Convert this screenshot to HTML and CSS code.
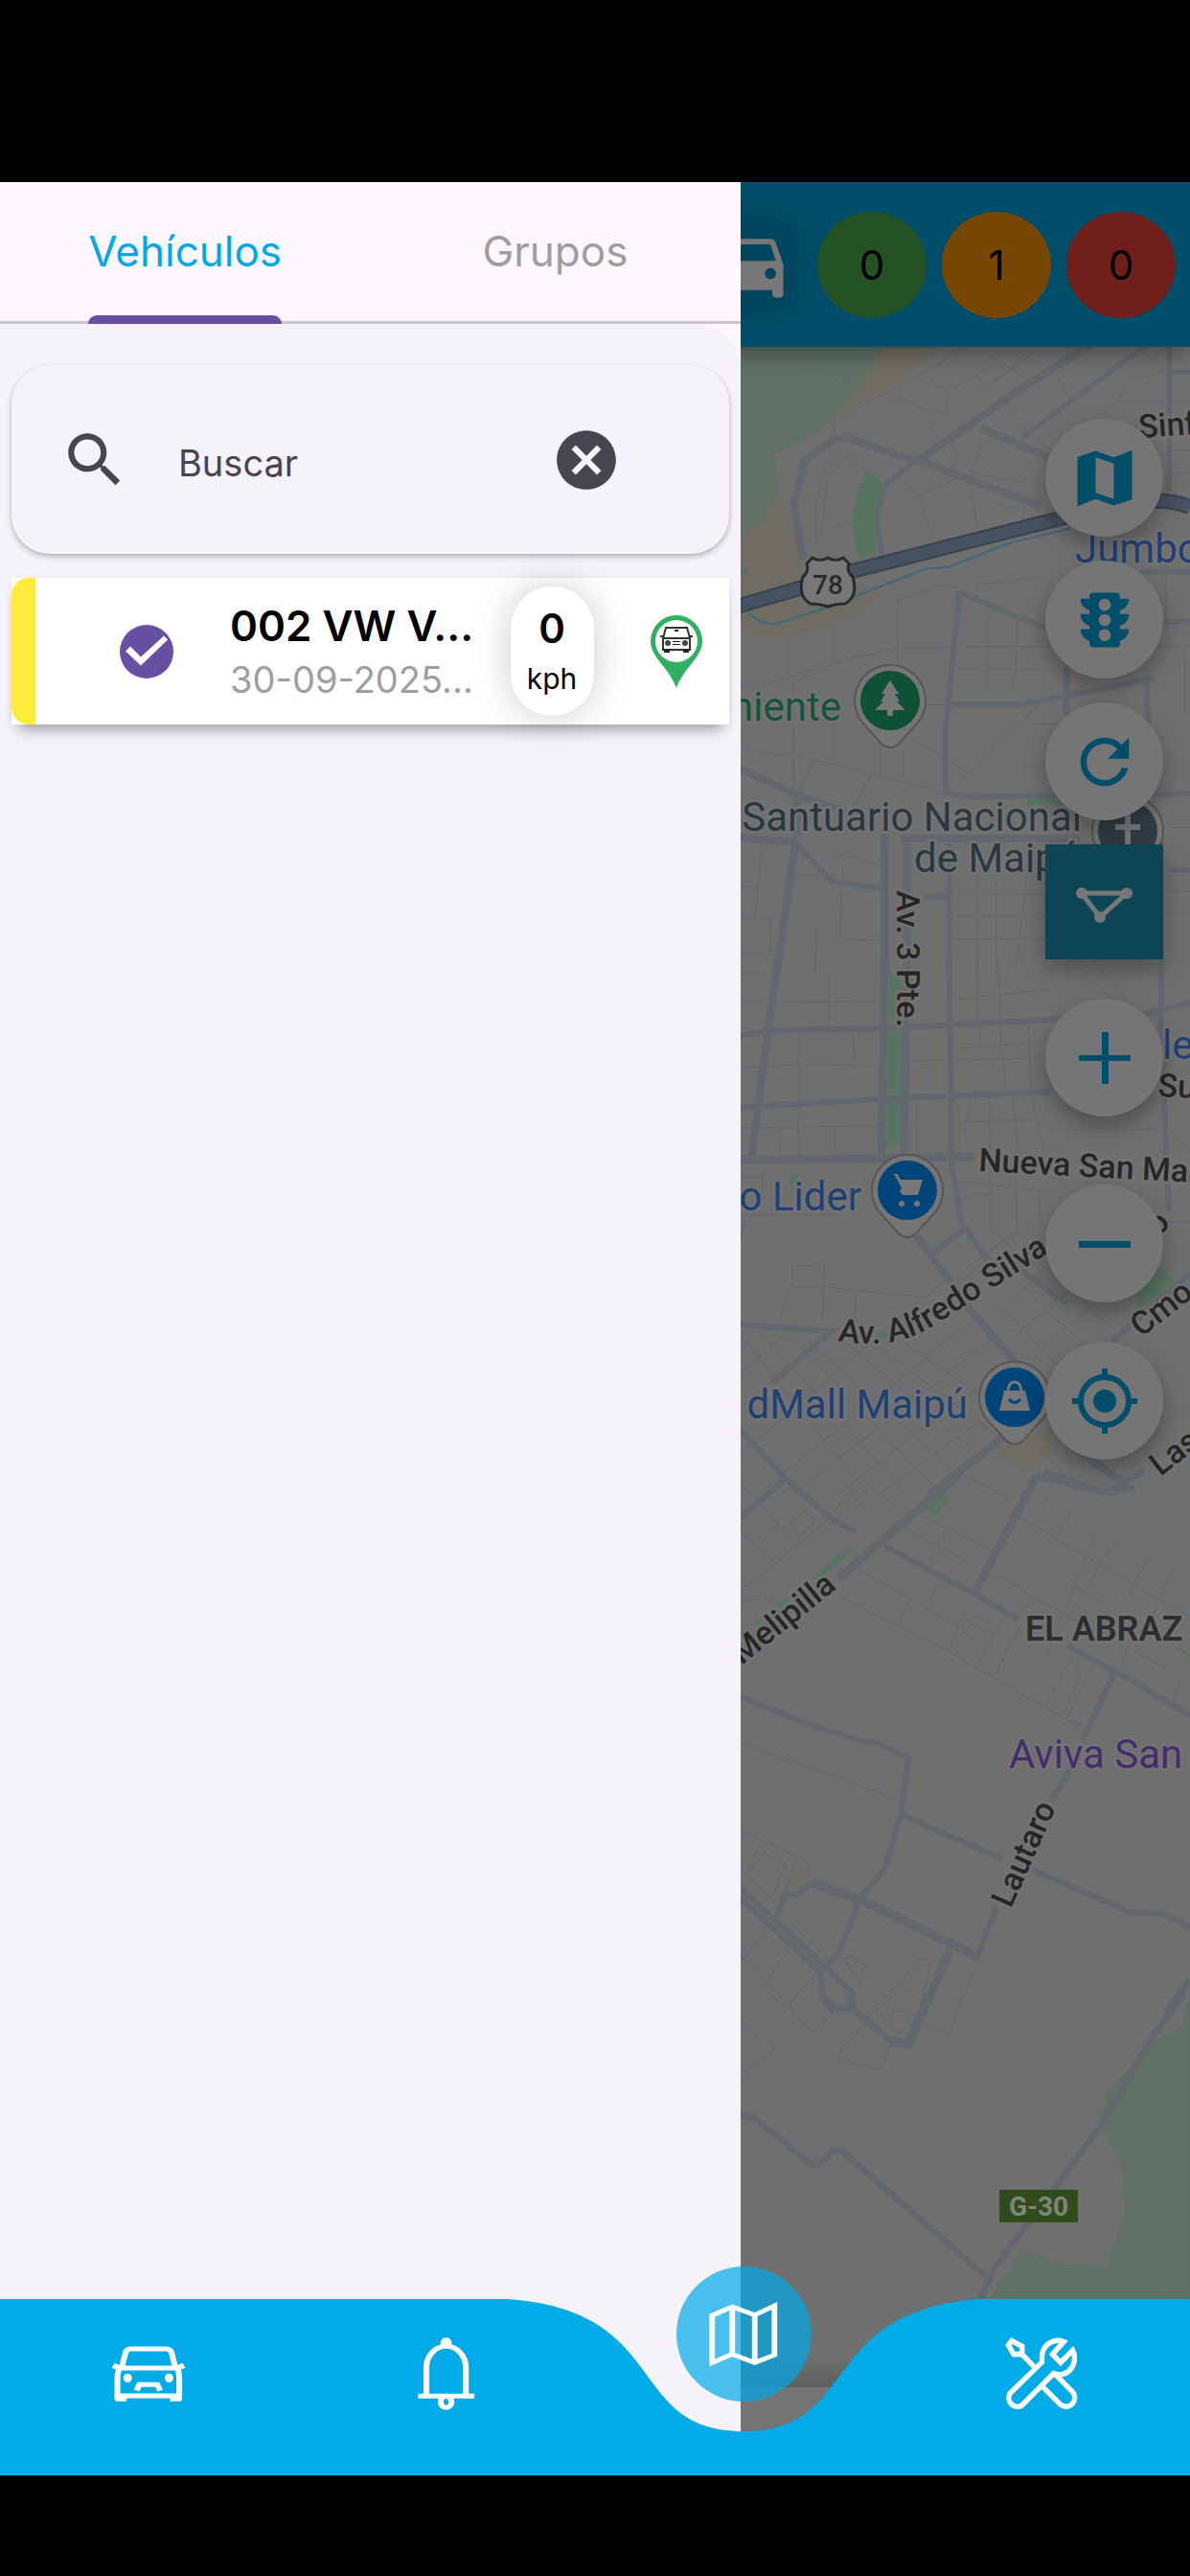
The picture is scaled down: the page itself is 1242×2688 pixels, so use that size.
FILE: index.html
```html
<!DOCTYPE html>
<html lang="es">
<head>
<meta charset="utf-8">
<meta name="viewport" content="width=device-width, initial-scale=1">
<title>Vehículos</title>
<link rel="stylesheet" href="styles.css">
</head>
<body>
<div class="app">
  <main class="screen">
    <header class="topbar">
      <span class="topbar-car">
        <svg viewBox="0 0 24 24" aria-hidden="true"><path d="M18.92 6.01C18.72 5.42 18.16 5 17.5 5h-11c-.66 0-1.21.42-1.42 1.01L3 12v8c0 .55.45 1 1 1h1c.55 0 1-.45 1-1v-1h12v1c0 .55.45 1 1 1h1c.55 0 1-.45 1-1v-8l-2.08-5.99zM6.5 16c-.83 0-1.5-.67-1.5-1.5S5.67 13 6.5 13s1.5.67 1.5 1.5S7.33 16 6.5 16zm11 0c-.83 0-1.5-.67-1.5-1.5s.67-1.5 1.5-1.5 1.5.67 1.5 1.5-.67 1.5-1.5 1.5zM5 11l1.5-4.5h11L19 11H5z"/></svg>
      </span>
      <span class="count count-green">0</span>
      <span class="count count-orange">1</span>
      <span class="count count-red">0</span>
    </header>

    <section class="map" aria-label="Mapa">
      <svg class="map-canvas" viewBox="0 362 1242 2129" preserveAspectRatio="xMaxYMin slice">
        <!-- northern districts -->
        <g transform="translate(760 180) scale(.3333)" fill="none" stroke-linejoin="round">
          <path class="wood" d="M0 540H495L400 680 290 800 145 880 155 1005 95 1090 0 1180Z"/>
          <path class="sand" d="M495 540H665L560 640 470 690 390 740 290 800 400 680ZM155 1005L215 1150 240 1300 400 1290 490 1310 400 1390 190 1455 90 1455 0 1380V1180L95 1090Z"/>
          <path class="lane" d="M160 575L440 690 690 760M700 580L540 660 530 700 640 760M740 548L590 640 700 690M850 600L690 680 680 750M320 790L540 660M330 790L330 825M360 860L300 930 275 1040 275 1160M375 880L310 960 290 1140M240 1155L380 1090M370 870L430 940M550 960L600 1010 690 970 740 940M600 1010L640 1150M760 990L780 1110M700 840L720 890 700 930M800 840L760 940 920 970M890 740L940 800M1030 640L1070 700M1180 760L1260 650 1380 620M1210 718H1446M900 600L820 660M960 560L800 680M1300 560L1380 640M1390 870H1446M1390 940H1446M790 1290L1000 1265M530 1340L660 1290 730 1300M620 780L660 800M810 570L930 640M840 1040L925 1055 920 1085"/>
          <path class="road" stroke-width="16" d="M1310 540L920 830M1382 540V1000M1390 625H1446M480 1200L465 1080 490 980 590 900"/>
          <path class="road" stroke-width="26" d="M1130 540L900 690 740 800 590 905M790 800L1000 890"/>
          <path class="road" stroke-width="24" d="M590 905L370 830Q340 820 240 905L205 1040 235 1210M590 900L980 1045"/>
          <path class="park" d="M435 930L490 975Q450 1050 465 1190L410 1210Q360 1060 435 930Z"/>
          <path d="M30 1358L230 1300 400 1245 1050 1080 1230 1045Q1360 1010 1446 1048" stroke="#374253" stroke-width="48"/>
          <path d="M30 1358L230 1300 400 1245 1050 1080 1230 1045Q1360 1010 1446 1048" stroke="#475260" stroke-width="36"/>
          <path d="M60 1380L100 1405 145 1415 300 1365 620 1240 690 1235 880 1160 1070 1115" stroke="#426973" stroke-width="7"/>
        </g>
        <g transform="translate(760 580) scale(.3333)" fill="none">
          <path class="lane" d="M185 260V390M330 210V330M39 400H120L200 380 330 335 530 290H720M470 340L475 450M210 390L270 370 340 330M390 465L690 467M530 140V340M530 140L650 95 720 100M780 90L1000 65M780 90V120M810 200V420M905 190V300L890 420M720 355H1000M740 285H1060M820 580L830 605 710 730M980 460L830 605M980 460L930 500 960 525H1060M39 605L280 640 450 685 740 755M270 640L215 740M205 400V740M330 450V640M475 580V700M450 685L390 790M550 600V690M570 570L690 640 750 680M1070 280H1446M1370 30V230M1430 290V500M930 680V655H1000M340 930L480 970M360 970L350 1200M105 910L85 1130M39 1030L95 1045M210 1000H340M39 1135H135L130 1240M39 1250H180M280 1150L270 1320M350 1200L480 1205M700 1060H990M700 1130H1000M700 1200H990M780 1000V1320M840 1010V1320M940 960L900 1300M960 1250H1140L1180 1320M1370 1050H1446M1370 1120H1446M1380 850H1446"/>
          <path class="road" stroke-width="18" d="M725 110L705 300 680 560V740L760 755 1446 745M700 465H920L1330 385M725 115L900 190 1000 225 1100 215 1446 205M1060 210V500M1310 380L1315 560M210 900L325 1020 500 1045M610 1070L690 1065M1380 985H1446M692 900V1320M1355 1260V1320M60 50H0M1290 50H1446"/>
          <path class="road" stroke-width="24" d="M0 650L210 745 390 810M215 740V880M540 885H1100M39 882L210 898M210 900L150 1320M490 870V1320M560 900V1320"/>
          <path class="park" d="M935 760H1080V780H935Z"/>
        </g>

        <!-- centre -->
        <g transform="translate(760 1000) scale(.3333 .3571)" fill="none">
          <path class="park" d="M505 30L545 80V180H500ZM500 215H552L545 395H495ZM492 415H552L548 545H492ZM190 625H225L195 670ZM1360 905L1400 945 1290 1025 1265 970ZM470 1090H505V1110H470Z"/>
          <path class="sand" d="M850 1440L880 1410 1010 1380 1005 1450 950 1505 840 1460ZM655 425H685V570H725V380H700V440Z"/>
          <path class="lane" d="M39 45H120M39 130L480 125M315 40V200M220 210V580M120 210L100 420M390 210L395 300M39 320L220 310 485 315M570 300L1010 290M790 200V260M700 265L920 250 1000 240M850 0V200L870 400M780 0V180M940 200L950 400M720 120L1010 90M39 495L480 490M160 490L165 580M335 490V580M590 420V570M820 400V780M760 410L740 500M890 400L910 570M950 400L990 560M720 480L980 470M710 650L1000 680M720 700L820 690M820 780L900 860M900 570L905 800 860 850M970 680L980 760M1060 500H1340M1070 0L1200 120 1290 170M1140 0L1290 170M39 640H110L105 700H190M60 740L39 820M200 900L300 895 295 1060M200 900V960H295L620 990 690 930M190 960L160 1070M400 980L395 1060M39 750H370M740 910L900 800M700 960L830 870M39 1100L440 1568M100 1090L560 1568M190 1100L640 1540M250 1120L720 1510M340 1100L800 1460M420 1100L850 1400M500 1090L870 1330M39 1210L180 1100M39 1310L400 1040M39 1450L600 1000M90 1568L760 1060M200 1568L830 1110M340 1568L870 1190M470 1568L790 1350M880 1010L1000 900M900 1100L1100 950M960 1170L1180 980M840 1000L1100 1260M900 940L1150 1160M1000 900L1200 1080M1380 770H1446M1380 500L1446 560M1240 860L1330 960"/>
          <path class="road" stroke-width="18" d="M39 225L140 210 480 205 1000 180 1320 160 1446 130M39 435L500 410 1010 390M692 0L700 600 730 770 810 880M640 860L740 790M39 1070L320 1090 140 1240M39 1380L190 1530M1357 0L1355 200 1380 740M900 900L1060 1010M990 1500L1180 1560 1300 1500M1446 920L1200 1120"/>
          <path class="road" stroke-width="24" d="M155 0L70 600M490 0L480 570M560 0L550 570M39 590L770 580M590 810L760 1030 900 1180M860 1400L630 1568M1080 1430L1250 1540"/>
        </g>

        <!-- southern districts -->
        <g transform="translate(760 1540) scale(.3333 .3571)" fill="none">
          <path class="park" d="M615 90L670 48 695 68 645 118ZM260 300L375 205 395 215 280 305ZM150 380L180 355 190 365 165 385ZM80 435L100 420V435ZM1380 490L1446 520V535Z"/>
          <path class="sand" d="M220 1145L255 1160 235 1205 190 1200Z"/>
          <path class="lane" d="M39 20L200 190M39 165L150 255M100 85L190 180M39 340L310 130M39 370L110 345 150 380M310 130L420 0M340 0L430 100M420 10L530 95M400 70L300 160M240 100L270 130 230 175 190 140ZM110 90L160 140 110 190 60 150M200 30L150 60M590 110L830 220M550 150L780 270M400 270L720 440 690 510M350 350L690 515 1110 740M570 360L530 440M660 300L630 380M680 170L630 260M750 0L880 70M910 120L1440 410M1000 60L980 100M1075 100L1040 170M1155 160L990 540M1215 185L1050 440M1315 240L1240 370M1390 280L1330 410M840 290L1100 430M980 360L910 390M1070 320L1180 370M750 380L690 510M760 400L820 430M740 420L810 460M730 450L790 490M860 420L770 570M920 430L830 590M1075 530L1100 580 1050 700M1075 530L990 680M1150 540L1060 710 1110 730M1260 480L1230 560M1270 510L1370 565 1350 540M1420 590L1395 660M39 780L530 945M39 1040L110 1065 250 1130 255 1160M110 1065L60 1150M110 1100L180 1135 135 1235 60 1165ZM220 1110L180 1210M39 1420L120 1320M120 1480L190 1380M190 1540L290 1440M39 1400L210 1568M200 1310L310 1410M360 1410L390 1405 430 1430 410 1480 360 1410M600 1410L530 1490 440 1568M600 1410Q640 1410 630 1440L610 1520 530 1490M770 1430L720 1568"/>
          <path class="road" stroke-width="18" d="M39 120L180 10 330 130 400 165M490 205L760 340 910 420M1060 495L1210 570 1446 700M1210 575L1110 770M1070 860L1010 950M840 1260L775 1420M39 645L250 725 420 775 480 785 565 825 540 990 490 1150 415 1230 350 1390 290 1450 295 1520 350 1568M540 990L860 1120M950 1150L1260 1275 1360 1280 1446 1320M39 1205L300 1430 390 1510V1568M39 1235L290 1450M150 1290L180 1220 215 1225 255 1190M965 0L1180 50 1275 35"/>
          <path class="road" stroke-width="26" d="M345 300L480 190 720 0M965 0L775 335M260 1190L420 1240 780 1405M695 1385L610 1568"/>
          <path class="road" stroke-width="22" d="M1446 1475L1370 1568"/>
        </g>
        <g transform="translate(760 2080) scale(.3333 .3444)" fill="none">
          <path class="wood" d="M1446 0L1420 100 1345 140 1185 300 1160 380 1235 530 1245 650 1185 830 1050 820 925 775 820 925 800 1200H1446Z"/>
          <path class="lane" d="M39 80L145 170 39 270M130 0L265 115 330 60M180 40L225 0M430 90L350 180V200L475 235 510 150M520 50L560 60 570 100 530 120 505 90ZM460 50L510 90M530 0L460 50M610 90L690 125 735 0"/>
          <path class="road" stroke-width="20" d="M290 0L325 50 380 45 385 0M380 40L510 145M39 370Q70 370 90 385L250 510Q270 530 290 515L325 480Q345 470 365 485L815 865M785 930L830 840Q900 740 950 685L1175 390 1330 130 1430 0"/>
          <path class="road" stroke-width="28" d="M510 145L565 155 630 0"/>
        </g>

        <!-- labels -->
        <g class="lbl street">
          <text transform="translate(1189 457) rotate(-4)">Sinf</text>
          <text transform="translate(936 929) rotate(90)">Av. 3 Pte.</text>
          <text transform="translate(1208 1144) rotate(3)">Su</text>
          <text transform="translate(1021 1222) rotate(3)">Nueva San Mar</text>
          <text transform="translate(1208 1291) rotate(-40)">o</text>
          <path id="silva" d="M874 1399Q930 1409 970 1386L1130 1285" fill="none" stroke="none"/>
          <text><textPath href="#silva">Av. Alfredo Silva</textPath></text>
          <text transform="translate(1191 1396) rotate(-38)">Cmo</text>
          <text transform="translate(1211 1541) rotate(-38)">Las</text>
          <text transform="translate(874 1657) rotate(-39)" text-anchor="end">Melipilla</text>
          <text transform="translate(1055 1992) rotate(-66)">Lautaro</text>
          <text class="district" x="1070" y="1712">EL ABRAZ</text>
        </g>
        <g class="lbl place">
          <text class="shop" x="1122" y="587">Jumbo</text>
          <text class="green" x="878" y="752" text-anchor="end">niente</text>
          <text class="civic" x="1129" y="867" text-anchor="end">Santuario Nacional</text>
          <text class="civic" x="954" y="910">de Maipú</text>
          <text class="shop" x="1213" y="1105">le</text>
          <text class="shop" x="899" y="1263" text-anchor="end">o Lider</text>
          <text class="shop" x="1010" y="1480" text-anchor="end">dMall Maipú</text>
          <text class="hotel" x="1053" y="1845">Aviva San</text>
        </g>

        <path d="M842 588l6-6q8 5 16 0 8 5 16 0l6 6q-3 8 4 14 6 20-8 28-10 0-18 3-8-3-18-3-14-8-8-28 7-6 4-14z" fill="#777" stroke="#2a2a2a" stroke-width="3"/>
        <text class="shield" x="864" y="620" text-anchor="middle">78</text>
        <path d="M1043 2285h82v34h-82z" fill="#314c1c"/>
        <text class="route" x="1084" y="2312" text-anchor="middle">G-30</text>

        <!-- place pins -->
        <defs>
          <path id="drop" d="M0-37A37 37 0 0 0-29 23L-9 45Q0 53 9 45L29 23A37 37 0 0 0 0-37Z"/>
        </defs>
        <g transform="translate(929 731)">
          <use href="#drop" class="drop"/><circle r="31" fill="#0e5137"/>
          <path d="M0-21L-9-7h4l-5 8h3L-16 10H-3v6H3v-6H16L7 1h3L5-7h4z" fill="#777"/>
        </g>
        <g transform="translate(1177 867)">
          <use href="#drop" class="drop"/><circle r="31" fill="#323d44"/>
          <path d="M-3-18H3v11H13v6H3V18H-3V-1H-13V-7H-3z" fill="#777"/>
        </g>
        <g transform="translate(947 1242)">
          <use href="#drop" class="drop"/><circle r="31" fill="#004579"/>
          <path d="M-15-17h5l3 6H16L11 5H-5L-8 1-6-2-12-14-15-17zM-4 7H10" fill="#777"/><circle cx="-6" cy="14" r="3" fill="#777"/><circle cx="10" cy="14" r="3" fill="#777"/>
        </g>
        <g transform="translate(1059 1458)">
          <use href="#drop" class="drop"/><circle r="31" fill="#004579"/>
          <path d="M-11-7H11L16 14H-16Z" fill="#777"/><path d="M-7-7Q-6-16 0-16T7-7" fill="none" stroke="#777" stroke-width="3"/><path d="M-6 2Q0 9 6 2" fill="none" stroke="#004579" stroke-width="3"/>
        </g>
      </svg>

      <div class="tools">
        <button class="fab" type="button" aria-label="Tipo de mapa"><svg viewBox="0 0 24 24"><path d="M15 5.1L9 3 3 5.02v16.2l6-2.33 6 2.1 6-2.02V2.77L15 5.1zm0 13.79l-6-2.11V5.11l6 2.11v11.67z"/></svg></button>
        <button class="fab" type="button" aria-label="Tráfico"><svg viewBox="0 0 24 24"><path d="M20 10h-3V8.86c1.72-.45 3-2 3-3.86h-3V4c0-.55-.45-1-1-1H8c-.55 0-1 .45-1 1v1H4c0 1.86 1.28 3.41 3 3.86V10H4c0 1.86 1.28 3.41 3 3.86V15H4c0 1.86 1.28 3.41 3 3.86V20c0 .55.45 1 1 1h8c.55 0 1-.45 1-1v-1.14c1.72-.45 3-2 3-3.86h-3v-1.14c1.72-.45 3-2 3-3.86zm-8 9c-1.11 0-2-.9-2-2s.89-2 2-2c1.1 0 2 .9 2 2s-.89 2-2 2zm0-5c-1.11 0-2-.9-2-2s.89-2 2-2c1.1 0 2 .9 2 2s-.89 2-2 2zm0-5c-1.11 0-2-.9-2-2 0-1.11.89-2 2-2 1.1 0 2 .89 2 2 0 1.1-.89 2-2 2z"/></svg></button>
        <button class="fab" type="button" aria-label="Actualizar"><svg viewBox="0 0 24 24"><path d="M17.65 6.35C16.2 4.9 14.21 4 12 4c-4.42 0-7.99 3.58-7.99 8s3.57 8 7.99 8c3.73 0 6.84-2.55 7.73-6h-2.08c-.82 2.33-3.04 4-5.65 4-3.31 0-6-2.69-6-6s2.69-6 6-6c1.66 0 3.14.69 4.22 1.78L13 11h7V4l-2.35 2.35z"/></svg></button>
        <button class="fab fab-square" type="button" aria-label="Geocercas"><svg viewBox="-38 -38 76 76"><path d="M-24-9H23L-5 16Z" fill="none" stroke="#777" stroke-width="5"/><circle cx="-24" cy="-9" r="6"/><circle cx="23" cy="-9" r="6"/><circle cx="-5" cy="16" r="6"/></svg></button>
        <div class="zoom">
          <button class="fab" type="button" aria-label="Acercar"><svg viewBox="-38 -38 76 76"><path d="M-27-3H-3V-27H4V-3H27V3H4V27H-3V3H-27z"/></svg></button>
          <button class="fab" type="button" aria-label="Alejar"><svg viewBox="-38 -38 76 76"><path d="M-27-3H27V4H-27z"/></svg></button>
        </div>
        <button class="fab" type="button" aria-label="Mi ubicación"><svg viewBox="-38 -38 76 76"><circle r="12"/><circle r="25" fill="none" stroke="#004e6a" stroke-width="6"/><path d="M-3-34H3V-25H-3zM-3 25H3V34H-3zM-34-3H-25V3H-34zM25-3H34V3H25z"/></svg></button>
      </div>
    </section>
  </main>

  <aside class="drawer">
    <div class="tabs" role="tablist">
      <button class="tab tab-active" type="button" role="tab" aria-selected="true"><span class="tab-label">Vehículos</span></button>
      <button class="tab" type="button" role="tab" aria-selected="false"><span class="tab-label">Grupos</span></button>
    </div>
    <div class="panel">
      <form class="search">
        <svg class="search-icon" viewBox="0 0 24 24" aria-hidden="true"><path d="M15.5 14h-.79l-.28-.27C15.41 12.59 16 11.11 16 9.5 16 5.91 13.09 3 9.5 3S3 5.91 3 9.5 5.91 16 9.5 16c1.61 0 3.09-.59 4.23-1.57l.27.28v.79l5 4.99L20.49 19l-4.99-5zm-6 0C7.01 14 5 11.99 5 9.5S7.01 5 9.5 5 14 7.01 14 9.5 11.99 14 9.5 14z"/></svg>
        <input class="search-input" type="text" placeholder="Buscar" aria-label="Buscar">
        <button class="clear" type="reset" aria-label="Borrar"><svg viewBox="0 0 24 24"><path d="M12 2C6.47 2 2 6.47 2 12s4.47 10 10 10 10-4.47 10-10S17.53 2 12 2zm5 13.59L15.59 17 12 13.41 8.41 17 7 15.59 10.59 12 7 8.41 8.41 7 12 10.59 15.59 7 17 8.41 13.41 12 17 15.59z"/></svg></button>
      </form>

      <label class="vehicle">
        <span class="status"></span>
        <input class="check" type="checkbox" checked>
        <span class="info">
          <span class="name">002 VW V...</span>
          <span class="date">30-09-2025...</span>
        </span>
        <span class="speed"><span class="speed-value">0</span><span class="speed-unit">kph</span></span>
        <svg class="pin" viewBox="0 0 54 76" aria-hidden="true">
          <path d="M27 0A27 27 0 0 0 0 27C0 44 19 54 27 76 35 54 54 44 54 27A27 27 0 0 0 27 0Z" fill="#31b063"/>
          <circle cx="27" cy="27" r="22" fill="#fff"/>
          <path d="M16 13H38L41 24V36H13V24ZM13 24H41M10 22H14M40 22H44" fill="none" stroke="#333" stroke-width="2"/>
          <path d="M14 35h6v4h-6zM34 35h6v4h-6zM25 15h4v2h-4zM23 27h8v1h-8zM23 30h8v1h-8z" fill="#222"/>
          <circle cx="18" cy="29" r="3" fill="#444"/><circle cx="36" cy="29" r="3" fill="#444"/>
        </svg>
      </label>
    </div>
  </aside>

  <nav class="nav">
    <svg class="nav-shape" viewBox="0 0 1242 184" preserveAspectRatio="none" aria-hidden="true"><path d="M0 0H528C702 11 652 138 776 138S851 11 1025 0H1242V184H0Z"/></svg>
    <a class="nav-item" href="#vehiculos" aria-label="Vehículos">
      <svg width="78" height="60" viewBox="285 322 191 180" preserveAspectRatio="none" fill="none" stroke="#fff" stroke-width="15">
        <path d="M312 392L322 345Q325 334 335 334H425Q436 334 439 345L449 392M306 394H456M306 395Q301 410 301 425V490M455 395Q459 410 459 425V490M301 481H459M350 465L357 446H403L410 465"/>
        <path d="M290 386L306 394M471 386L455 394" stroke-width="17"/>
        <path d="M294 475H327L324 498H298Q294 498 294 490ZM466 475H433L436 498H462Q466 498 466 490Z" fill="#fff" stroke="none"/>
        <ellipse cx="327" cy="425" rx="11" ry="14" fill="#fff" stroke="none"/><ellipse cx="433" cy="425" rx="11" ry="14" fill="#fff" stroke="none"/>
      </svg>
    </a>
    <a class="nav-item" href="#alertas" aria-label="Alertas">
      <svg width="60" height="76" viewBox="1069 297 146 228" preserveAspectRatio="none" fill="none" stroke="#fff" stroke-width="15">
        <path d="M1091 478V390A50 65 0 0 1 1191 390V478M1070 481H1213"/>
        <path d="M1127 325V312A14 14 0 0 1 1155 312V325Z" fill="#fff" stroke="none"/>
        <ellipse cx="1141" cy="499" rx="14" ry="18"/>
      </svg>
    </a>
    <a class="nav-item nav-current" href="#mapa" aria-label="Mapa">
      <span class="bubble">
        <svg width="72" height="68" viewBox="343 190 175 203" preserveAspectRatio="none" fill="none" stroke="#fff" stroke-width="14"><path d="M351 232L402 205 459 231 509 202V355L459 379 402 353 351 379ZM402 205V353M459 231V379"/></svg>
      </span>
    </a>
    <a class="nav-item" href="#herramientas" aria-label="Herramientas">
      <svg width="76" height="76" viewBox="867 1043 227 220" preserveAspectRatio="none" fill="none" stroke="#fff" stroke-width="16">
        <path d="M877 1066L888 1053 920 1070V1094H894ZM918 1092L962 1136M982 1118V1105A50 50 0 0 1 1050 1056L1015 1094 1040 1119 1078 1082A48 50 0 0 1 1018 1152L920 1248A27 27 0 0 1 882 1212ZM984 1192L1040 1246A27 27 0 0 0 1078 1208L1024 1155"/>
      </svg>
    </a>
  </nav>
</div>
</body>
</html>
```

FILE: styles.css
```css
* { box-sizing: border-box; }

html, body { height: 100%; }

body {
  margin: 0;
  padding: 190px 0 105px;
  background: #000;
  font-family: Inter, "Liberation Sans", sans-serif;
}

button {
  padding: 0;
  border: 0;
  background: none;
  font: inherit;
  color: inherit;
}

svg { display: block; }

/* The screen, the drawer and the bottom bar share one grid cell */
.app {
  display: grid;
  grid-template: minmax(0, 1fr) / minmax(0, 1fr);
  height: 100%;
  overflow: hidden;
}

.screen, .drawer, .nav { grid-area: 1 / 1; }

.screen {
  display: flex;
  flex-direction: column;
  min-height: 0;
  padding-bottom: 92px;
  background: #747474;
}

/* Top bar */
.topbar {
  z-index: 1;
  display: flex;
  align-items: center;
  justify-content: flex-end;
  gap: 16px;
  height: 172px;
  padding-right: 15px;
  background: #004e6a;
  box-shadow: 0 4px 24px rgba(0, 0, 0, .4);
}

.topbar-car {
  margin-right: 8px;
  border-radius: 24px;
  background: #00465f;
  box-shadow: 0 0 24px 8px #00465f;
}

.topbar-car svg { width: 92px; height: 92px; fill: #777; }

.count {
  width: 114px;
  height: 111px;
  border-radius: 50%;
  line-height: 111px;
  text-align: center;
  font-size: 42px;
}

.count-green { background: #245224; }
.count-orange { background: #774600; }
.count-red { background: #701f1a; }

/* Map */
.map {
  flex: 1;
  display: grid;
  grid-template: minmax(0, 1fr) / minmax(0, 1fr);
  min-height: 0;
  background: #6f6f6f;
}

.map::after {
  content: "";
  grid-area: 1 / 1;
  align-self: end;
  height: 32px;
  background: linear-gradient(transparent, rgba(0, 0, 0, .15));
}

.map-canvas, .tools { grid-area: 1 / 1; }
.map-canvas { width: 100%; height: 100%; }

.wood { fill: #5f7065; }
.park { fill: #587362; }
.sand { fill: #6f6c64; }
.lane { stroke: #65696d; stroke-width: 4; }
.road { stroke: #61676c; }
.drop { fill: #757575; stroke: #555; stroke-width: 2; }

.lbl {
  font-family: Roboto, sans-serif;
  paint-order: stroke;
  stroke: #737373;
  stroke-width: 5px;
  stroke-linejoin: round;
}

.street { font-size: 34px; font-weight: 500; fill: #262626; }
.district { font-size: 36px; font-weight: 600; fill: #2c2e30; }
.place { font-size: 42px; }
.shop { fill: #1f4076; }
.green { fill: #15533a; }
.civic { fill: #2b373f; }
.hotel { fill: #452c6c; }
.shield { font: 500 28px Roboto, sans-serif; fill: #2a2a2a; }
.route { font: 700 28px Roboto, sans-serif; fill: #7f857b; }

.tools {
  display: flex;
  flex-direction: column;
  justify-self: end;
  gap: 25px;
  padding: 75px 28px 0 0;
}

.fab {
  display: grid;
  place-items: center;
  flex: none;
  width: 123px;
  height: 123px;
  border-radius: 50%;
  background: #757575;
  box-shadow: 0 10px 24px rgba(0, 0, 0, .3);
}

.fab svg { width: 76px; height: 76px; fill: #004e6a; }

.fab-square { height: 120px; border-radius: 0; background: #0e4555; }
.fab-square svg { fill: #777; }

.zoom {
  display: flex;
  flex-direction: column;
  gap: 71px;
  padding: 16px 0;
}

/* Drawer */
.drawer {
  z-index: 2;
  display: flex;
  flex-direction: column;
  width: 62.2%;
  background: #fef7ff;
}

.tabs {
  display: grid;
  grid-template-columns: 1fr 1fr;
  height: 148px;
  border-bottom: 3px solid #cac4d0;
}

.tab {
  display: grid;
  justify-content: center;
  height: 148px;
  color: #9e9e9e;
  font-size: 44px;
}

.tab-label {
  display: grid;
  grid-template-rows: 139px 9px;
  height: 148px;
  line-height: 144px;
}

.tab-active { color: #00a9e6; }

.tab-active .tab-label::after {
  content: "";
  border-radius: 9px 9px 0 0;
  background: #6750a4;
}

.panel {
  flex: 1;
  display: flex;
  flex-direction: column;
  gap: 25px;
  padding: 43px 12px;
  border-radius: 0 48px 0 0;
  background: #f6f2f9;
}

.search {
  display: flex;
  align-items: center;
  height: 197px;
  padding: 0 112px 0 50px;
  border-radius: 40px;
  background: #f6f2f9;
  box-shadow: 0 3px 6px rgba(0, 0, 0, .24), 0 1px 3px rgba(0, 0, 0, .08);
}

.search svg { width: 74px; height: 74px; fill: #49454f; }
.search-icon { flex: none; }

.search-input {
  flex: 1;
  min-width: 0;
  padding: 6px 0 0 50px;
  border: 0;
  outline: 0;
  background: none;
  font: 400 38px Inter, sans-serif;
  color: #49454f;
}

.search-input::placeholder { color: #49454f; opacity: 1; }

.vehicle {
  display: flex;
  align-items: center;
  height: 153px;
  padding-right: 28px;
  background: #fff;
  box-shadow: 0 14px 14px -8px rgba(0, 0, 0, .3), 0 2px 8px rgba(0, 0, 0, .08);
}

.status {
  align-self: stretch;
  width: 25px;
  border-radius: 18px 0 0 18px;
  background: #ffeb3b;
}

.check {
  appearance: none;
  flex: none;
  width: 56px;
  height: 56px;
  margin: 0 59px 0 88px;
  border: 3px solid #6750a4;
  border-radius: 50%;
}

.check:checked { border: 0; background: #6750a4; }

.check:checked::after {
  content: "";
  display: block;
  height: 56px;
  background: #fff;
  clip-path: polygon(6px 28px, 11px 23px, 22px 34px, 46px 12px, 50px 16px, 22px 43px);
}

.info {
  flex: 1;
  display: flex;
  flex-direction: column;
  min-width: 0;
  padding-top: 2px;
  white-space: nowrap;
}

.name { font-size: 44px; font-weight: 600; line-height: 56px; }
.date { font-size: 38px; font-weight: 400; line-height: 56px; color: #9e9e9e; }

.speed {
  display: flex;
  flex-direction: column;
  align-items: center;
  justify-content: center;
  width: 87px;
  height: 135px;
  margin-right: 59px;
  border-radius: 44px;
  background: #fff;
  box-shadow: 0 0 40px rgba(0, 0, 0, .2);
}

.speed-value { font-size: 42px; font-weight: 600; line-height: 56px; }
.speed-unit { font-size: 30px; line-height: 48px; }
.pin { width: 54px; height: 76px; }

/* Bottom bar */
.nav {
  z-index: 3;
  align-self: end;
  display: grid;
  grid-template-columns: repeat(4, 1fr);
  grid-template-rows: 184px;
}

.nav-shape {
  grid-area: 1 / 1 / 2 / 5;
  width: 100%;
  height: 184px;
  fill: #00abe8;
}

.nav-item {
  grid-row: 1;
  display: flex;
  align-items: center;
  justify-content: center;
  padding-bottom: 28px;
}

.nav-item:nth-of-type(1) { grid-column: 1; }
.nav-item:nth-of-type(2) { grid-column: 2; }
.nav-item:nth-of-type(3) { grid-column: 3; }
.nav-item:nth-of-type(4) { grid-column: 4; }

.nav-item.nav-current {
  align-items: flex-start;
  padding: 0;
}

.bubble {
  display: grid;
  place-items: center;
  width: 141px;
  height: 141px;
  margin-top: -34px;
  border-radius: 50%;
  background: rgba(0, 170, 232, .7);
}
```
